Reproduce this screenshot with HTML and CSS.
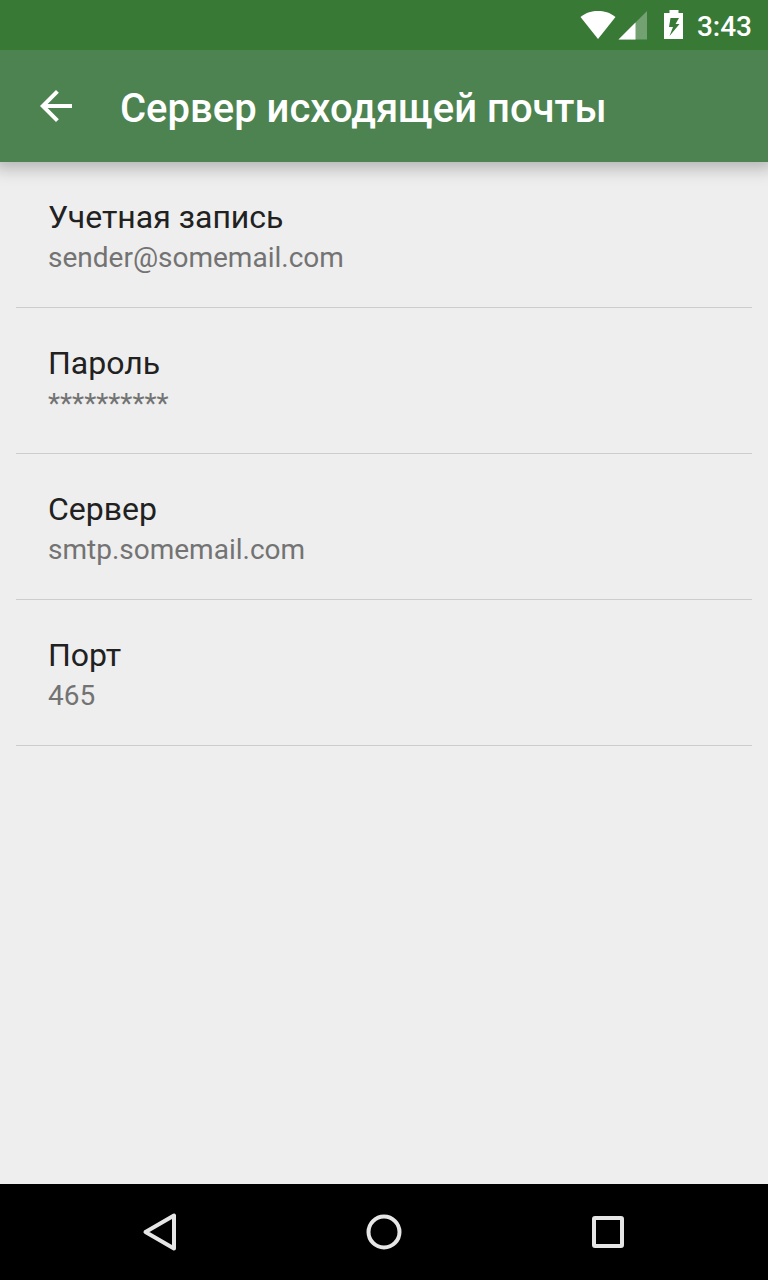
FILE: index.html
```html
<!DOCTYPE html>
<html lang="ru">
<head>
<meta charset="utf-8">
<meta name="viewport" content="width=device-width, initial-scale=1">
<title>Сервер исходящей почты</title>
<link rel="stylesheet" href="styles.css">
</head>
<body>
<div class="screen">
  <div class="status-bar">
    <svg class="icon-wifi" width="36" height="30" viewBox="0 0 36 30" aria-hidden="true"><path d="M18 29 .5 7C6 2.500 12 1 18 1s12 1.500 17.500 6z" fill="#fff"/></svg>
    <svg class="icon-signal" width="30" height="30" viewBox="0 0 30 30" aria-hidden="true"><path d="M29 1v28.500H.500z" fill="#fff" fill-opacity=".3"/><path d="M17.500 12.500v17H.500z" fill="#fff"/></svg>
    <svg class="icon-battery" width="20" height="30" viewBox="0 0 20 30" aria-hidden="true"><path fill="#fff" fill-rule="evenodd" d="M5.500 0h9v3H19v26H0V3h5.500zM6.500 8 5 17h4L5.500 26 15.500 14h-4l3.500-6z"/></svg>
    <time class="clock">3:43</time>
  </div>
  <header class="app-bar">
    <button class="back" type="button" aria-label="Назад">
      <svg width="48" height="48" viewBox="0 0 24 24" aria-hidden="true"><path d="M20 11H7.830l5.590-5.590L12 4l-8 8 8 8 1.410-1.410L7.830 13H20v-2z" fill="#fff"/></svg>
    </button>
    <h1 class="title">Сервер исходящей почты</h1>
  </header>
  <main class="content">
    <ul class="settings">
      <li><button class="setting" type="button"><span class="name">Учетная запись</span><span class="value">sender@somemail.com</span></button></li>
      <li><button class="setting" type="button"><span class="name">Пароль</span><span class="value">**********</span></button></li>
      <li><button class="setting" type="button"><span class="name">Сервер</span><span class="value">smtp.somemail.com</span></button></li>
      <li><button class="setting" type="button"><span class="name">Порт</span><span class="value">465</span></button></li>
    </ul>
  </main>
  <nav class="nav-bar">
    <button class="nav-button" type="button" aria-label="Назад"><svg width="48" height="48" viewBox="0 0 48 48" aria-hidden="true"><path d="M38 7.500v33L9.500 24z"/></svg></button>
    <button class="nav-button" type="button" aria-label="Домой"><svg width="48" height="48" viewBox="0 0 48 48" aria-hidden="true"><circle cx="24" cy="24" r="15.500"/></svg></button>
    <button class="nav-button" type="button" aria-label="Обзор"><svg width="48" height="48" viewBox="0 0 48 48" aria-hidden="true"><rect x="10" y="10" width="28" height="28" rx="1"/></svg></button>
  </nav>
</div>
</body>
</html>
```
FILE: styles.css
```css
* {
  box-sizing: border-box;
}

body {
  margin: 0;
  background: #eee;
  font-family: Roboto, "Noto Sans", sans-serif;
}

button {
  border: 0;
  padding: 0;
  background: none;
  color: inherit;
  font: inherit;
  cursor: pointer;
}

svg {
  display: block;
}

.screen {
  display: flex;
  flex-direction: column;
  min-height: 100vh;
  overflow-x: clip;
}

.status-bar {
  position: relative;
  z-index: 1;
  display: flex;
  align-items: center;
  justify-content: flex-end;
  height: 50px;
  padding-right: 16px;
  background: #377935;
  color: #fff;
}

.icon-signal {
  margin-left: 2px;
}

.icon-battery {
  margin-left: 16px;
}

.clock {
  margin-left: 13px;
  padding-top: 4px;
  font-size: 28px;
  font-weight: 500;
  line-height: 34px;
}

.app-bar {
  display: flex;
  align-items: center;
  gap: 40px;
  height: 112px;
  padding: 0 32px;
  background: #4d8350;
  color: #fff;
  box-shadow: 0 0 16px 6px rgba(0, 0, 0, 0.26);
}

.title {
  margin: 0;
  padding-top: 6px;
  font-size: 40px;
  font-weight: 500;
  line-height: 48px;
}

.content {
  flex: 1;
  padding: 0 16px;
}

.settings {
  margin: 0;
  padding: 0;
  list-style: none;
}

.setting {
  display: flex;
  flex-direction: column;
  width: 100%;
  padding: 35px 32px 28px;
  border-bottom: 1px solid #cdcdcd;
  text-align: left;
}

.name {
  color: #212121;
  font-size: 32px;
  line-height: 40px;
}

.value {
  color: #737373;
  font-size: 28px;
  line-height: 42px;
}

.nav-bar {
  display: flex;
  justify-content: center;
  gap: 64px;
  height: 96px;
  background: #000;
}

.nav-button {
  display: flex;
  align-items: center;
  justify-content: center;
  width: 160px;
}

.nav-button svg {
  fill: none;
  stroke: #e6e6e6;
  stroke-width: 4;
  stroke-linejoin: round;
}
```
